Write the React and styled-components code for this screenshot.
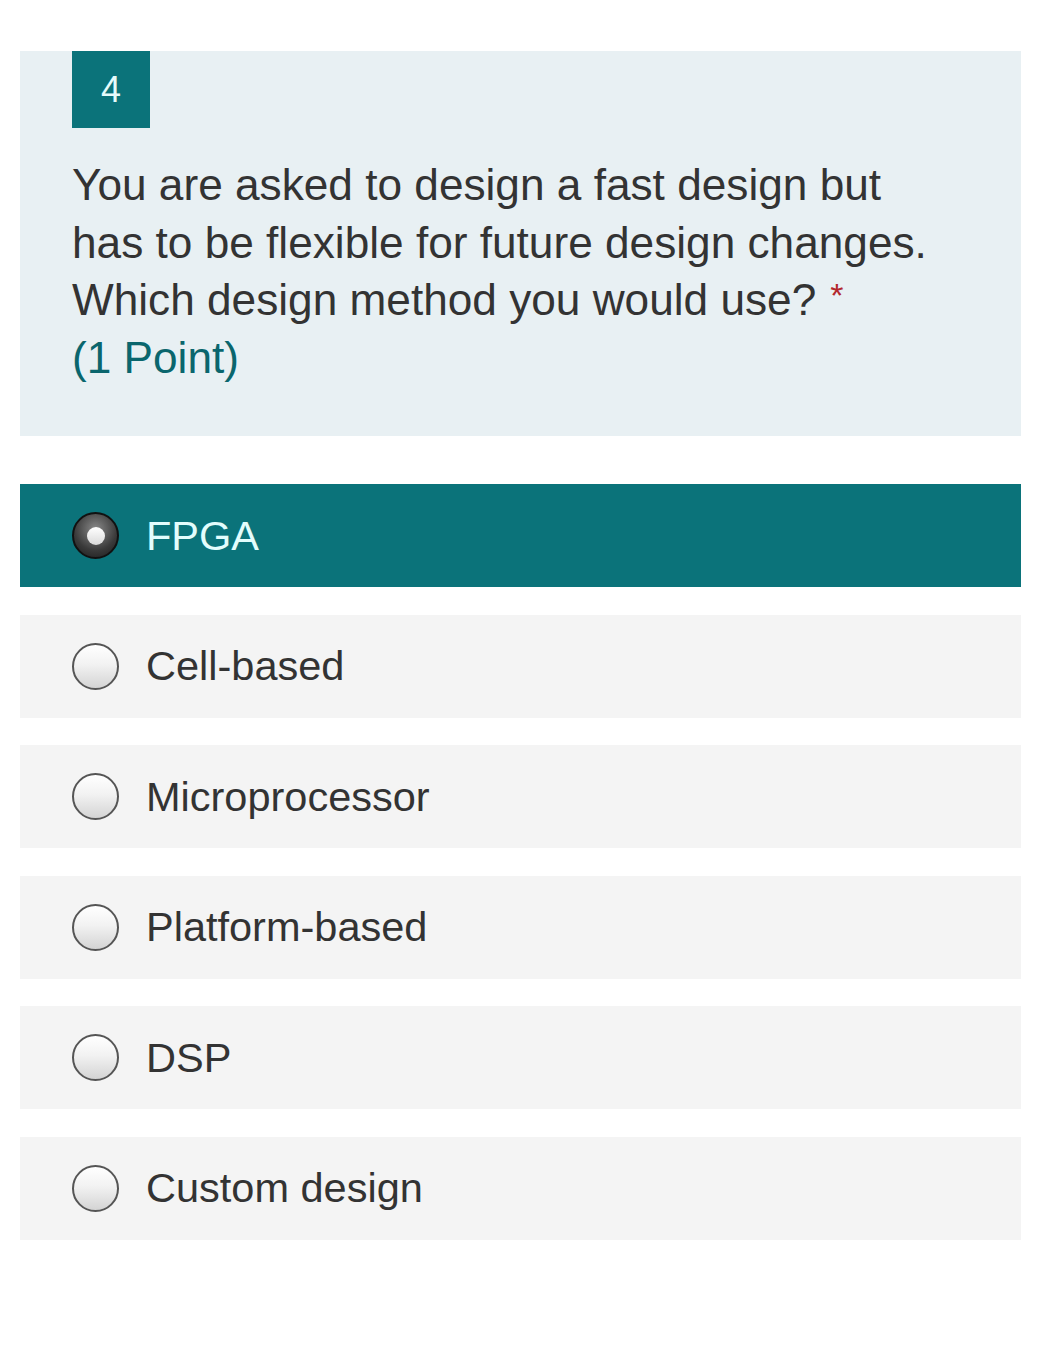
import React from "react";
import styled, { createGlobalStyle } from "styled-components";

const GlobalStyle = createGlobalStyle`
  body {
    margin: 0;
    background: #ffffff;
    font-family: "Liberation Sans", Arial, sans-serif;
  }
`;

const options = [
  "FPGA",
  "Cell-based",
  "Microprocessor",
  "Platform-based",
  "DSP",
  "Custom design"
];

const Page = styled.div`
  width: 1001px;
  padding: 51px 0 0 20px;
`;

const QuestionCard = styled.div`
  background: #e8f0f3;
  padding: 0 52px 50px;
  height: 385px;
  box-sizing: border-box;
`;

const Badge = styled.div`
  width: 78px;
  height: 77px;
  background: #0b737a;
  color: #e6fbfb;
  font-size: 36px;
  display: flex;
  align-items: center;
  justify-content: center;
`;

const QuestionText = styled.div`
  margin-top: 28px;
  font-size: 44.2px;
  line-height: 57.5px;
  color: #333333;
`;

const Star = styled.span`
  color: #b3282d;
  font-size: 34px;
  line-height: 0;
  margin-left: 14px;
  position: relative;
  top: -8px;
`;

const Points = styled.div`
  color: #0a666d;
`;

const OptionList = styled.div`
  margin-top: 48px;
  display: flex;
  flex-direction: column;
  gap: 27.5px;
`;

const Option = styled.div`
  height: 103px;
  display: flex;
  align-items: center;
  padding-left: 52px;
  background: ${(p) => (p.selected ? "#0b737a" : "#f4f4f4")};
  color: ${(p) => (p.selected ? "#e3fdfd" : "#333333")};
  font-size: 41.5px;
`;

const Radio = styled.span`
  width: 47px;
  height: 47px;
  box-sizing: border-box;
  border-radius: 50%;
  margin-right: 27px;
  display: flex;
  align-items: center;
  justify-content: center;
  border: 2px solid ${(p) => (p.selected ? "#111" : "#555")};
  background: ${(p) =>
    p.selected
      ? "radial-gradient(circle at 50% 35%, #8a8a8a 0%, #3a3a3a 60%, #1a1a1a 100%)"
      : "linear-gradient(#ffffff 0%, #f2f2f2 45%, #d4d4d4 100%)"};
`;

const Dot = styled.span`
  width: 18px;
  height: 18px;
  border-radius: 50%;
  background: linear-gradient(#ffffff, #d9d9d9);
`;

export default function App() {
  const selected = "FPGA";
  return (
    <Page>
      <GlobalStyle />
      <QuestionCard>
        <Badge>4</Badge>
        <QuestionText>
          You are asked to design a fast design but
          <br />
          has to be flexible for future design changes.
          <br />
          Which design method you would use?
          <Star>*</Star>
          <Points>(1 Point)</Points>
        </QuestionText>
      </QuestionCard>
      <OptionList>
        {options.map((o) => (
          <Option key={o} selected={o === selected}>
            <Radio selected={o === selected}>
              {o === selected && <Dot />}
            </Radio>
            {o}
          </Option>
        ))}
      </OptionList>
    </Page>
  );
}
